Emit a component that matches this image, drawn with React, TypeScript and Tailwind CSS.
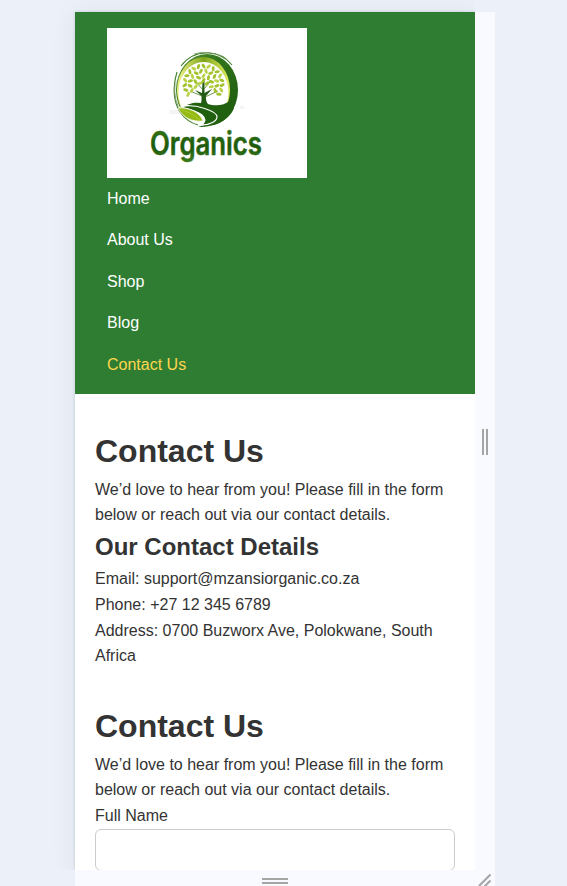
import React from "react";

const links = ["Home", "About Us", "Shop", "Blog", "Contact Us"];

const leaves = [
  { radius: 18, count: 17, from: 145, to: 395 },
  { radius: 13, count: 12, from: 150, to: 390 },
  { radius: 8, count: 7, from: 160, to: 380 },
  { radius: 3.5, count: 3, from: 190, to: 350 },
].flatMap(({ radius, count, from, to }) =>
  Array.from({ length: count }, (_, i) => {
    const angle = from + ((to - from) * i) / (count - 1);
    const rad = (angle * Math.PI) / 180;
    return {
      x: 96.5 + radius * 1.04 * Math.cos(rad),
      y: 56 + radius * Math.sin(rad),
      turn: angle + (i % 2 ? 35 : -30),
      fill: i % 3 === 0 ? "#b9d247" : "#a2c32d",
    };
  }),
);

function Logo() {
  return (
    <svg width="200" height="150" viewBox="0 0 200 150" className="block bg-white" role="img" aria-label="Organics">
      <defs>
        <linearGradient id="ring" x1="0" y1="0" x2="1" y2="1">
          <stop offset="0" stopColor="#5d9335" />
          <stop offset="0.4" stopColor="#2f7419" />
          <stop offset="1" stopColor="#1d5510" />
        </linearGradient>
        <linearGradient id="glow" x1="0" y1="0" x2="1" y2="0">
          <stop offset="0" stopColor="#f3f58a" />
          <stop offset="0.5" stopColor="#7fa51c" />
          <stop offset="1" stopColor="#e3ed62" />
        </linearGradient>
        <linearGradient id="word" x1="0" y1="0" x2="0" y2="1">
          <stop offset="0" stopColor="#3c7c18" />
          <stop offset="0.6" stopColor="#1c5a0a" />
          <stop offset="1" stopColor="#3e7d1c" />
        </linearGradient>
      </defs>
      <path d="M63 82h9v4H62zM133 78h4v3h-4z" fill="#f5f5f3" />
      <g transform="translate(1 0)">
        <ellipse cx="99" cy="62" rx="31" ry="36" fill="url(#ring)" />
        <ellipse cx="95.5" cy="62" rx="26.5" ry="33" fill="url(#glow)" />
        <ellipse cx="95.5" cy="64.5" rx="25" ry="30.5" fill="#fff" />
        <path d="M69 79Q75 92 88 99L100 99L108 94L92 83Z" fill="#fff" />
        <path d="M73 38Q83 25 98 25Q114 24 124 37M69 44Q62 68 72 84Q79 94 90 97" fill="none" stroke="#40802c" strokeWidth="1.1" />
        <path d="M86 26Q101 21 116 30M67 55Q65 72 74 86" fill="none" stroke="#6e975b" strokeWidth="0.8" />
      </g>
      <path d="M92 79Q95 76 94.5 68L88 62L95 65L95.5 52L97.5 52L97.5 65L105 61L99 68Q98 75 104 79Z" fill="#235b15" />
      <path d="M95 68L83 63M98 69L111 63M96 62L89 54M97 61L103 54" fill="none" stroke="#477c2e" strokeWidth="0.8" />
      {leaves.map((leaf, i) => (
        <ellipse key={i} cx={leaf.x} cy={leaf.y} rx="2.7" ry="1.5" fill={leaf.fill} transform={`rotate(${leaf.turn} ${leaf.x} ${leaf.y})`} />
      ))}
      <path d="M80 77C88 73 97 75 105 77C112 78 117 77 124 72L127 80C123 91 110 99 91 99C100 97 109 92 109 88C106 82 91 79 80 77Z" fill="#20600f" />
      <path d="M74 79C87 75 110 83 110 89C110 93 103 97 95 97C99 93 99 91 95 87C89 82 81 81 74 79Z" fill="#20600f" stroke="#fff" strokeWidth="1.1" />
      <path d="M71 80C81 79 93 84 96 93C85 94 76 90 71 80Z" fill="#94ba16" stroke="#f8faed" strokeWidth="0.8" />
      <path d="M75 82Q85 85 93 92" fill="none" stroke="#b3ce38" strokeWidth="0.7" />
      <text x="43" y="126.5" fontFamily="Inter, sans-serif" fontWeight="600" fontSize="32" textLength="112" lengthAdjust="spacingAndGlyphs" fill="url(#word)" stroke="url(#word)" strokeWidth="0.5" strokeLinejoin="round">Organics</text>
    </svg>
  );
}

function Intro() {
  return (
    <>
      <h1 className="text-[32px] leading-[1.6] font-bold">Contact Us</h1>
      <p>We’d love to hear from you! Please fill in the form below or reach out via our contact details.</p>
    </>
  );
}

export default function App() {
  return (
    <div className="h-[886px] w-[567px] overflow-hidden bg-[#ebf0f9] pt-3 pl-[75px] font-['Liberation_Sans',Arial,sans-serif] text-base leading-[1.6] text-[#333]">
      <div className="grid h-[874px] w-[420px] grid-cols-[400px_20px] grid-rows-[858px_16px]">
        <div className="bg-white shadow-[0_0_3px_rgba(0,0,0,0.14),0_2px_24px_rgba(55,65,60,0.08)] [clip-path:inset(-12px_0_0_-30px)]">
          <header className="flex h-[382px] flex-col gap-[7.6px] bg-[#2e7d32] px-8 pt-4">
            <Logo />
            <ul className="flex flex-col gap-4 text-white">
              {links.map((link) => (
                <li key={link} className={link === "Contact Us" ? "text-[#ffd54f]" : ""}>{link}</li>
              ))}
            </ul>
          </header>
          <main className="flex flex-col gap-[31.8px] px-5 pt-[31.65px]">
            <section>
              <Intro />
              <h2 className="text-2xl leading-[1.6] font-bold">Our Contact Details</h2>
              <p>Email: support@mzansiorganic.co.za</p>
              <p>Phone: +27 12 345 6789</p>
              <p>Address: 0700 Buzworx Ave, Polokwane, South Africa</p>
            </section>
            <section>
              <Intro />
              <label className="block">
                <span className="block">Full Name</span>
                <input className="block h-[42px] w-full rounded-[6px] border border-[#ccc] bg-white px-3" />
              </label>
            </section>
          </main>
        </div>
        <div className="flex items-center justify-center gap-0.5 bg-[#f8faff] pt-0.5">
          <span className="h-[26px] w-0.5 bg-[#a5a5a5]" />
          <span className="h-[26px] w-0.5 bg-[#a5a5a5]" />
        </div>
        <div className="flex flex-col items-center gap-0.5 bg-[#f8faff] pt-2">
          <span className="h-0.5 w-[26px] bg-[#a5a5a5]" />
          <span className="h-0.5 w-[26px] bg-[#a5a5a5]" />
        </div>
        <div className="bg-[#f8faff]">
          <svg width="20" height="16" viewBox="0 0 20 16" fill="none" stroke="#a5a5a5" strokeWidth="2.1">
            <path d="M4 16L15.5 4.5M9.5 16.5L15.5 10.5" />
          </svg>
        </div>
      </div>
    </div>
  );
}
